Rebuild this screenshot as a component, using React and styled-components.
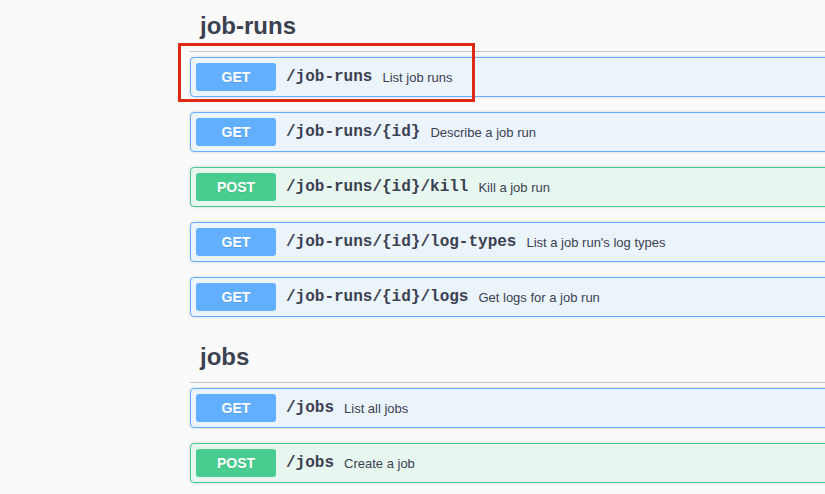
import React from "react";
import styled, { createGlobalStyle } from "styled-components";

const sections = [
  {
    name: "job-runs",
    ops: [
      { method: "GET", path: "/job-runs", summary: "List job runs", marked: true },
      { method: "GET", path: "/job-runs/{id}", summary: "Describe a job run" },
      { method: "POST", path: "/job-runs/{id}/kill", summary: "Kill a job run" },
      { method: "GET", path: "/job-runs/{id}/log-types", summary: "List a job run's log types" },
      { method: "GET", path: "/job-runs/{id}/logs", summary: "Get logs for a job run" },
    ],
  },
  {
    name: "jobs",
    ops: [
      { method: "GET", path: "/jobs", summary: "List all jobs" },
      { method: "POST", path: "/jobs", summary: "Create a job" },
    ],
  },
];

const methodColors = {
  GET: { main: "#61affe", bg: "#ebf3fb" },
  POST: { main: "#49cc90", bg: "#e8f6f0" },
};

const App = () => (
  <>
    <GlobalStyle />
    <Page>
      <Content>
        {sections.map((s) => (
          <TagSection key={s.name}>
            <TagHeading>{s.name}</TagHeading>
            {s.ops.map((op) => (
              <Opblock key={op.method + op.path} method={op.method}>
                {op.marked && <Highlight />}
                <MethodBadge method={op.method}>{op.method}</MethodBadge>
                <Path>{op.path}</Path>
                <Summary>{op.summary}</Summary>
              </Opblock>
            ))}
          </TagSection>
        ))}
      </Content>
    </Page>
  </>
);

export default App;

// Styled Components

const GlobalStyle = createGlobalStyle`
  html, body {
    margin: 0;
    background: #fafafa;
    overflow: hidden;
  }
  body {
    font-family: "Liberation Sans", Arial, sans-serif;
    color: #3b4151;
  }
`;

const Page = styled.div`
  width: 825px;
  height: 494px;
  overflow: hidden;
  padding-top: 1px;
  box-sizing: border-box;
`;

const Content = styled.div`
  margin-left: 190px;
  width: 720px;
`;

const TagSection = styled.div`
  display: flex;
  flex-direction: column;
`;

const TagHeading = styled.h3`
  margin: 0 0 5px;
  height: 51px;
  box-sizing: border-box;
  padding: 10px 20px 0 10px;
  font-size: 24px;
  line-height: 30px;
  font-weight: 700;
  color: #3b4151;
  border-bottom: 1px solid #c3c5ca;
`;

const Opblock = styled.div`
  position: relative;
  display: flex;
  align-items: center;
  height: 40px;
  box-sizing: border-box;
  padding: 5px;
  margin: 0 0 15px;
  border: 1px solid ${(p) => methodColors[p.method].main};
  background: ${(p) => methodColors[p.method].bg};
  border-radius: 4px;
  box-shadow: 0 0 3px rgba(0, 0, 0, 0.19);
`;

const MethodBadge = styled.span`
  flex: none;
  width: 80px;
  height: 28px;
  line-height: 28px;
  text-align: center;
  border-radius: 3px;
  background: ${(p) => methodColors[p.method].main};
  color: #fff;
  font-size: 14px;
  font-weight: 700;
  text-shadow: 0 1px 0 rgba(0, 0, 0, 0.1);
`;

const Path = styled.span`
  padding: 0 10px;
  font-family: "Liberation Mono", "Courier New", monospace;
  font-size: 16px;
  font-weight: 700;
  color: #3b4151;
`;

const Summary = styled.span`
  font-size: 13px;
  color: #3b4151;
`;

const Highlight = styled.span`
  position: absolute;
  left: -13px;
  top: -15px;
  width: 297px;
  height: 59px;
  box-sizing: border-box;
  border: 3px solid #dd2a14;
  pointer-events: none;
`;
